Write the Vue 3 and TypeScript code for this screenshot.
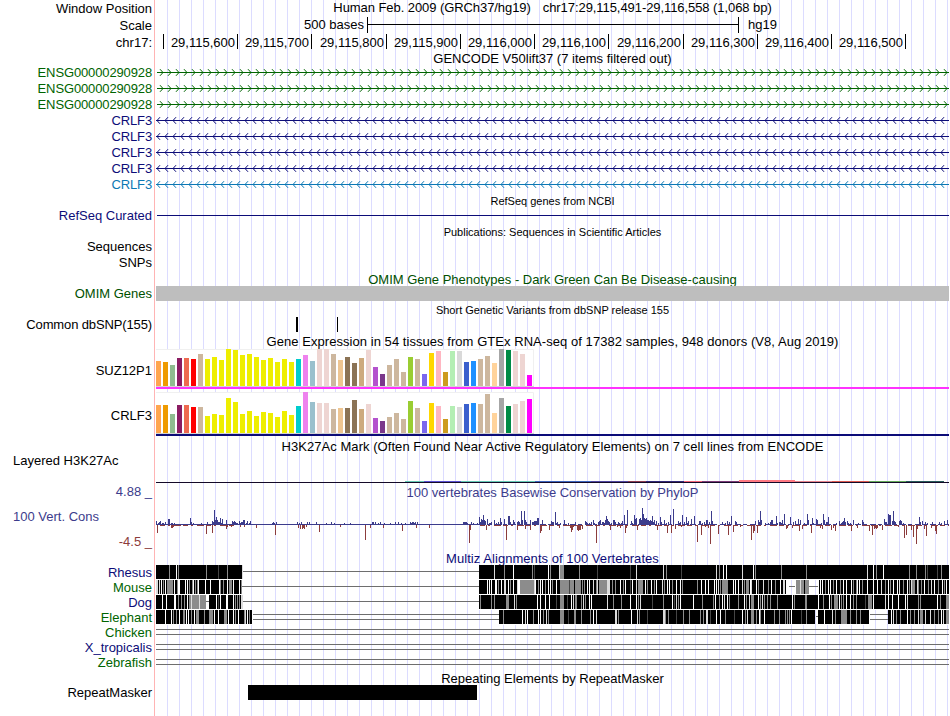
<script setup lang="ts">
import { ref } from 'vue'

const ticks = [163, 237, 311, 386, 460, 534, 608, 683, 757, 831, 905]
const tickLabels = ['', '29,115,600', '29,115,700', '29,115,800', '29,115,900', '29,116,000', '29,116,100', '29,116,200', '29,116,300', '29,116,400', '29,116,500']

const genes = ref([
  { name: 'ENSG00000290928', color: '#006400', forward: true },
  { name: 'ENSG00000290928', color: '#006400', forward: true },
  { name: 'ENSG00000290928', color: '#006400', forward: true },
  { name: 'CRLF3', color: '#0c0c78', forward: false },
  { name: 'CRLF3', color: '#0c0c78', forward: false },
  { name: 'CRLF3', color: '#0c0c78', forward: false },
  { name: 'CRLF3', color: '#0c0c78', forward: false },
  { name: 'CRLF3', color: '#0c78b4', forward: false },
])

function arrows(forward: boolean) {
  let d = ''
  for (let x = forward ? 163 : 157; x < 950; x += 8) {
    const tail = forward ? x - 3 : x + 3
    d += `M${tail} 5.2L${x} 8.5L${tail} 11.8`
  }
  return d
}

const yellow = Array(13).fill('#eeee00')
const tissueColors = [
  '#ffa54f', '#ee9a00', '#8fbc8f', '#8b1c62', '#ee6a50', '#ff0000', '#cdb79e', ...yellow,
  '#00cdcd', '#ee82ee', '#9ac0cd', '#eed5d2', '#eed5d2', '#cdb79e', '#eec591', '#8b7355',
  '#8b7355', '#cdaa7d', '#eed5d2', '#b452cd', '#7a378b', '#cdb79e', '#cdb79e', '#cdb79e',
  '#9acd32', '#cdb79e', '#7a67ee', '#ffd700', '#ffb6c1', '#cd9b1d', '#b4eeb4', '#d9d9d9',
  '#3a5fcd', '#1e90ff', '#cdb79e', '#cdb79e', '#ffd39b', '#a6a6a6', '#008b45', '#eed5d2',
  '#eed5d2', '#ff00ff',
]

const expression = [
  {
    name: 'SUZ12P1', height: 40, base: 37, top: 0, line: '#ff32ff',
    values: [25, 24, 21, 28, 28, 27, 32, 27, 29, 26, 37, 36, 31, 32, 29, 26, 28, 24, 27, 24, 27, 31, 25, 37, 37, 32, 26, 29, 23, 28, 36, 19, 12, 21, 27, 14, 29, 27, 12, 33, 35, 14, 35, 35, 24, 25, 27, 30, 23, 37, 36, 35, 32, 11],
  },
  {
    name: 'CRLF3', height: 47, base: 44, top: 3, line: '#0c0c78',
    values: [28, 28, 19, 28, 28, 26, 26, 17, 19, 18, 35, 31, 19, 22, 17, 21, 20, 16, 22, 18, 27, 41, 31, 30, 30, 24, 25, 25, 33, 24, 29, 15, 12, 16, 20, 14, 32, 25, 12, 30, 27, 14, 27, 26, 29, 30, 29, 39, 20, 35, 27, 29, 32, 34],
  },
]

const histone = [
  [405, 130, 1, '#64c8b4'], [424, 37, 1, '#5a50d2'], [535, 56, 1, '#3c64be'], [591, 37, 1, '#5046a0'],
  [628, 18, 1, '#8c3c50'], [646, 38, 1, '#322878'], [684, 18, 1, '#f06478'], [702, 37, 1, '#7d3c78'],
  [739, 56, 2, '#ff7882'], [795, 37, 1, '#e6828c'], [832, 37, 1, '#dc5a50'], [869, 37, 1, '#64aa5a'],
  [906, 38, 1, '#285a5a'],
] as [number, number, number, string][]

// "position:score" pairs, in pixels
const conserved = '156:4 158:2 159:3 160:4 162:2 163:2 165:3 168:6 169:6 171:2 172:2 174:2 190:7 191:3 193:2 201:2 207:3 212:4 213:3 214:15 215:5 216:8 217:5 218:3 219:3 220:7 221:2 222:6 226:5 232:4 233:3 234:4 235:3 236:2 237:2 239:4 240:2 241:3 242:3 243:5 244:5 246:2 247:4 249:2 250:4 272:2 273:3 274:2 276:3 297:3 299:2 301:3 307:3 309:3 316:3 326:2 331:3 334:2 344:2 350:2 372:3 373:3 375:3 378:2 380:3 384:2 390:2 395:3 398:3 401:2 405:2 410:3 411:2 412:3 413:3 414:2 415:3 417:3 463:3 464:3 465:3 466:3 467:2 471:3 473:2 477:2 479:8 480:3 481:6 482:5 483:10 484:5 485:4 487:6 489:2 490:2 491:3 494:5 496:2 498:3 500:7 501:3 504:6 508:9 509:9 510:3 513:5 514:3 517:3 518:4 519:3 521:14 522:5 524:14 525:5 526:3 530:5 532:3 533:3 534:4 535:4 536:4 537:7 538:7 542:5 551:4 552:3 553:3 555:13 556:2 557:3 560:2 564:5 568:2 575:3 585:4 586:3 587:2 589:2 591:3 593:5 594:2 598:3 599:4 600:5 602:3 603:3 604:2 605:5 606:9 607:6 608:4 609:3 611:2 613:5 614:5 615:3 618:3 619:2 621:2 622:4 624:10 627:15 631:4 632:2 634:10 635:6 636:7 639:6 640:7 641:5 642:17 643:11 644:7 645:6 646:7 647:5 648:5 649:4 650:5 651:4 652:9 653:3 654:5 656:4 658:2 660:8 661:3 664:5 666:2 668:3 670:10 673:16 678:4 679:2 680:3 682:10 684:3 686:8 687:2 688:4 691:6 694:9 699:4 700:4 702:2 704:3 706:5 707:5 709:3 711:14 712:4 722:3 725:2 727:4 729:3 731:9 735:4 736:3 755:4 758:5 759:3 760:14 761:5 765:2 768:2 770:3 771:5 772:5 776:9 777:2 779:3 780:3 781:2 782:5 784:11 790:8 793:3 795:4 798:6 800:5 804:2 807:11 808:5 812:7 813:2 816:6 817:5 821:2 823:11 824:5 826:3 827:3 828:8 836:2 839:4 841:2 842:3 843:4 844:7 845:3 847:4 848:2 850:2 853:5 858:2 862:5 863:3 884:6 885:3 886:3 888:11 889:10 890:10 892:4 893:14 894:4 895:3 899:4 900:5 901:4 903:2 919:8 920:3 922:4 925:3 927:2 932:3 939:3 941:2 944:4 947:5'
const accelerated = '157:8 171:3 172:3 173:2 206:9 212:8 226:4 227:2 231:2 240:2 244:2 256:3 275:10 298:3 300:4 302:4 303:3 304:4 306:2 319:7 340:2 365:15 370:3 383:3 402:6 416:3 429:3 469:18 470:5 486:5 506:15 517:5 525:4 530:5 540:8 541:6 549:5 559:3 570:3 571:7 572:5 573:2 577:5 578:6 579:5 580:5 582:4 596:18 610:5 617:2 620:3 625:8 626:3 637:5 657:5 667:8 671:8 675:4 681:2 697:17 701:10 705:2 708:3 710:19 718:9 728:10 733:7 740:2 751:15 753:8 754:6 757:8 786:4 787:3 792:3 799:6 802:4 811:8 820:3 822:4 831:5 833:3 835:6 851:6 857:3 869:6 872:10 874:4 875:3 876:4 877:3 882:5 898:2 904:13 906:10 911:5 913:12 916:19 917:4 924:4 926:11 931:3 935:6 936:9'

function bars(list: string, dir: number) {
  return list.split(' ').map((p) => {
    const [x, h] = p.split(':').map(Number)
    return `M${x}.5 26V${26 - h * dir}`
  }).join('')
}

// stripe codes: w = white, l = light, g = grey, d = dark; trailing number is width
const tones: Record<string, string> = { w: '#ffffff', l: '#dcdcdc', g: '#8c8c8c', d: '#464646' }

const species = [
  {
    name: 'Rhesus', color: '#0c0c78', blocks: [[156, 87], [479, 470]], single: [[243, 236]], double: [],
    marks: '169g 176w 178g 206g 218d 227g 242l 494l 504g 513w 532g 534d 548w 550g 559l 560g4 579g 597d 630d 636l 663l 666g 681d 716l 719g 723w 726w 742l 753w 755g 781g 806g 867l 873w 876g 883w 909g 916g 925g 927d 937d 941g',
  },
  {
    name: 'Mouse', color: '#006400', blocks: [[156, 86], [479, 308], [795, 14], [819, 130]], single: [[242, 237], [789, 6], [809, 9]], double: [],
    marks: '156l2 159l 161w 163g 165w 167g6 174w 177g 178w2 185w 187w 189g 192g 193w 195g 197g 198w 205w 210w 219w 220g 223g 227w 229g3 233w 239w 241g 487w 489w 491w 495w2 498g 501w 504l2 508w 510g 513w 517l 518w2 520g14 534l 535w 538g 540w 542w 545g 548w 550w 552g 556w 560g9 569d 570g4 575g6 582g 584g 587w 589w 593l 596g 597l 599g8 607l3 612g 615g 620w 623g 625w 630d 632w 636l 638g5 645w 647g 651w 654g 656w 662l 664g 667w 669w 672g 676w 680w 682g 697g 701w 705w 708w 714w 716w 718l 720g 722g6 733w 735w 738w 742l 744g 746g3 750w 751l 756w 758g 763l 768g 771w 775g 780w 783l2 786w 795w 796g4 800l 801g3 805g4 820w 822w 825g 828w 830w 833g 836w 840g 843w 846w 851w 853g 856g 857w 859w 862g 867w 873w 877w 881l 885g 888w 890g 893w 897w 899l 903g 907w 909g 911l 912g3 917l 918g 921g 924w 928g 931l 934w 938g 942w 944g 946w',
  },
  {
    name: 'Dog', color: '#0c0c78', blocks: [[156, 50], [209, 34], [479, 470]], single: [[206, 3], [243, 236]], double: [],
    marks: '162w 166w 174w2 178g 181g 184g 187w 189g2 191l 192g7 199l 200g6 216w 218d 220w 226w2 233w 235g 237g 239g 241l2 480g 491g 494g 506g3 514l 516g 537w 540w 545w 549w 556d 560g4 567d 571w 573l 575g2 581g 583l 585g 589w 591w 607l 613g 621g 630w 636w 638g 640l 652d 663g 672w 674d 676l 678g 680w 693w 702g 713g 715w 719g 722w 724l 727w 729g 738g 744w 746g 749l 751g3 758w 760g 762l 764g 767g 770g 777g 792w 794g 805g2 818w 823g 829w 831g 834g4 839w 841g 843g 846w 850w 853g 856g 865d 868g4 873w 885l 888w 892w 898w 905w 907l 918g 920g 937w 940g 946g3',
  },
  {
    name: 'Elephant', color: '#006400', blocks: [[156, 96], [499, 316], [818, 51], [888, 61]], single: [[816, 2]], double: [[253, 246], [870, 18]],
    marks: '165w 171w 173g 176g 179w 183g2 186w 188w 191g 194w 196g3 204g 209g4 214w 218w 224g3 228w 233w 235g 238w 244g 245l 247w 249g 503g 522w 525l 527w 533g 538w 540w 543g 546l 548g 560g4 568d 574g2 581g 590g 593w 596l 615l2 618g 631w 637l 639g 647d 663l2 665g 668g 676d 683g 689g 700g 703g 706l2 710d 716w 720w 725g 734d 742w 745g 747l 751g3 756g 759w 760g 764w 774g 779g 785g 787g 789g 791w 801d 806g 824w 832l 835g 841g6 850g 856g 860g 891w 893l 896g 900g 907w 910g 914g 918l 920g3 925l 930l 934g 938g 941w 943l 946g3',
  },
  { name: 'Chicken', color: '#006400', blocks: [], single: [], double: [[156, 793]], marks: '' },
  { name: 'X_tropicalis', color: '#0c0c78', blocks: [], single: [], double: [[156, 793]], marks: '' },
  { name: 'Zebrafish', color: '#006400', blocks: [], single: [], double: [[156, 793]], marks: '' },
]

function stripes(marks: string) {
  if (!marks) return []
  return marks.split(' ').map((m) => {
    const [, x, tone, w] = m.match(/(\d+)([wlgd])(\d*)/)!
    return { x: Number(x), w: Number(w || 1), fill: tones[tone] }
  })
}
</script>

<template>
  <div class="browser">
    <div class="row h17">
      <div class="label">Window Position</div>
      <div class="title pos"><span>Human Feb. 2009 (GRCh37/hg19)</span><span>chr17:29,115,491-29,116,558 (1,068 bp)</span></div>
    </div>
    <div class="row">
      <div class="label">Scale</div>
      <svg class="data" viewBox="156 0 793 16" height="16">
        <text x="364" y="12" text-anchor="end">500 bases</text>
        <path d="M367.5 0V16M738.5 0V16M367 7.5H739" stroke="#000" />
        <text x="748" y="12">hg19</text>
      </svg>
    </div>
    <div class="row h17">
      <div class="label low">chr17:</div>
      <svg class="data" viewBox="156 0 793 17" height="17">
        <g v-for="(x, i) in ticks" :key="x">
          <rect :x="x" y="1" width="1" height="15" />
          <text :x="x - 2" y="14" text-anchor="end">{{ tickLabels[i] }}</text>
        </g>
      </svg>
    </div>

    <div class="title h14">GENCODE V50lift37 (7 items filtered out)</div>
    <div v-for="(gene, i) in genes" :key="i" class="row">
      <div class="label tight" :style="{ color: gene.color }">{{ gene.name }}</div>
      <svg class="data" viewBox="156 0 793 16" height="16" fill="none" :stroke="gene.color">
        <path :d="gene.forward ? 'M157 8.5H949' : 'M156 8.5H949'" />
        <path :d="arrows(gene.forward)" />
      </svg>
    </div>

    <div class="title small h16">RefSeq genes from NCBI</div>
    <div class="row h15">
      <div class="label navy">RefSeq Curated</div>
      <svg class="data" viewBox="156 0 793 15" height="15"><rect x="157" y="7" width="792" height="1" fill="#0c0c78" /></svg>
    </div>

    <div class="title small h16">Publications: Sequences in Scientific Articles</div>
    <div class="row up"><div class="label">Sequences</div></div>
    <div class="row up"><div class="label">SNPs</div></div>

    <div class="title omim h15">OMIM Gene Phenotypes - Dark Green Can Be Disease-causing</div>
    <div class="row h15">
      <div class="label omim">OMIM Genes</div>
      <div class="data grey"></div>
    </div>

    <div class="title small h16">Short Genetic Variants from dbSNP release 155</div>
    <div class="row h15">
      <div class="label tight">Common dbSNP(155)</div>
      <svg class="data" viewBox="156 0 793 15" height="15">
        <rect x="296" width="2" height="15" />
        <rect x="337" width="1" height="15" />
      </svg>
    </div>

    <div class="title loose gtex h17">Gene Expression in 54 tissues from GTEx RNA-seq of 17382 samples, 948 donors (V8, Aug 2019)</div>
    <div v-for="track in expression" :key="track.name" class="row tall" :style="{ height: track.height + 'px' }">
      <div class="label">{{ track.name }}</div>
      <svg class="data" :viewBox="`156 0 793 ${track.height}`" :height="track.height">
        <rect x="156" :y="track.top" width="378" :height="track.base - track.top" fill="#fff" />
        <path :d="`M156 ${track.top + 0.5}H533.5V${track.base}`" fill="none" stroke="#f0f0f0" />
        <rect x="156" :y="track.base" width="378" height="1" fill="#d3d3d3" />
        <rect v-for="(v, i) in track.values" :key="i" :x="156 + i * 7" :y="track.base - v" width="5" :height="v" :fill="tissueColors[i]" />
        <rect x="156" :y="track.base + 1" width="793" height="2" :fill="track.line" />
      </svg>
    </div>

    <div class="title loose h18">H3K27Ac Mark (Often Found Near Active Regulatory Elements) on 7 cell lines from ENCODE</div>
    <div class="row h30">
      <div class="label left">Layered H3K27Ac</div>
      <svg class="data" viewBox="156 0 793 30" height="30">
        <rect x="156" y="28" width="793" height="1" fill="#140a28" />
        <rect v-for="h in histone" :key="h[0]" :x="h[0]" :y="28 - h[2]" :width="h[1]" :height="h[2]" :fill="h[3]" />
      </svg>
    </div>

    <div class="row cons">
      <div class="label axis">
        <span>4.88 _</span>
        <span class="left">100 Vert. Cons</span>
        <span class="neg">-4.5 _</span>
      </div>
      <div class="data">
        <div class="title inner">100 vertebrates Basewise Conservation by PhyloP</div>
        <svg class="data" viewBox="156 0 793 51" height="51">
          <path d="M156 25.5H480" stroke="#3c3c8c" />
          <path d="M160 26.5H235M480 26.5H949" stroke="#8c3c3c" stroke-dasharray="5 3 2 4 7 2" />
          <path d="M480 25.5H949" stroke="#3c3c8c" stroke-dasharray="6 2 4 3" />
          <path :d="bars(conserved, 1)" stroke="#3c3c8c" />
          <path :d="bars(accelerated, -1)" stroke="#8c3c3c" />
        </svg>
      </div>
    </div>

    <div class="title navy loose h15">Multiz Alignments of 100 Vertebrates</div>
    <div v-for="s in species" :key="s.name" class="row h15">
      <div class="label" :style="{ color: s.color }">{{ s.name }}</div>
      <svg class="data" viewBox="156 0 793 15" height="15">
        <g v-for="b in s.blocks" :key="b[0]">
          <rect :x="b[0]" :width="b[1]" height="15" fill="#fff" />
          <rect :x="b[0]" :width="b[1]" height="14" />
        </g>
        <rect v-for="m in stripes(s.marks)" :key="m.x" :x="m.x" :width="m.w" height="14" :fill="m.fill" />
        <rect v-for="l in s.single" :key="'s' + l[0]" :x="l[0]" y="6" :width="l[1]" height="1" fill="#6e6e6e" />
        <g v-for="l in s.double" :key="'d' + l[0]" fill="#6e6e6e">
          <rect :x="l[0]" y="4" :width="l[1]" height="1" />
          <rect :x="l[0]" y="9" :width="l[1]" height="1" />
        </g>
      </svg>
    </div>

    <div class="title h15">Repeating Elements by RepeatMasker</div>
    <div class="row h15">
      <div class="label">RepeatMasker</div>
      <svg class="data" viewBox="156 0 793 15" height="15"><rect x="248" width="229" height="15" /></svg>
    </div>
  </div>
</template>

<style>
body {
  margin: 0;
  background: #fff;
}
</style>

<style scoped>
.browser {
  width: 950px;
  height: 716px;
  overflow: hidden;
  font-family: 'Liberation Sans', Arial, sans-serif;
  font-size: 13px;
  color: #000;
  background:
    linear-gradient(#ffb4b4, #ffb4b4) 154px 0 / 1px 100% no-repeat,
    repeating-linear-gradient(to right, #dcdcff 0, #dcdcff 1px, transparent 1px, transparent 12px) 167px 0 / 783px 100% no-repeat;
}

.row {
  display: flex;
  gap: 4px;
  height: 16px;
}

.label {
  width: 152px;
  flex: none;
  line-height: 17px;
  text-align: right;
  white-space: nowrap;
}

.label.tight {
  letter-spacing: -0.13px;
}

.label.low {
  line-height: 20px;
}

.label.left,
.label .left {
  box-sizing: border-box;
  padding-left: 13px;
  text-align: left;
}

.data {
  display: block;
  width: 793px;
  flex: none;
}

svg text {
  font-size: 13px;
}

.title {
  width: 793px;
  margin-left: 156px;
  line-height: 17px;
  text-align: center;
  white-space: nowrap;
}

.title.loose {
  letter-spacing: 0.05px;
}

.title.pos {
  display: flex;
  justify-content: center;
  gap: 12px;
  margin-left: 0;
  line-height: 16px;
  letter-spacing: -0.07px;
}

.title.inner {
  height: 15px;
  margin-left: 0;
  color: #3c3c8c;
}

.title.small {
  font-size: 11px;
  line-height: 18px;
}

.h15 .label,
.up .label {
  line-height: 15px;
}

.tall .label {
  line-height: 43px;
}

.tall + .tall .label {
  line-height: 47px;
  padding-top: 3px;
}

.h14 { height: 14px; }
.h15 { height: 15px; }
.h16 { height: 16px; }
.h17 { height: 17px; }
.h18 { height: 18px; line-height: 22px; }
.h30 { height: 30px; }

.title.gtex {
  line-height: 19px;
}

.h30 .label {
  line-height: 14px;
}

.row.cons {
  height: 66px;
}

.axis {
  display: flex;
  flex-direction: column;
  gap: 9px;
  line-height: 16px;
  color: #3c3c8c;
}

.neg {
  color: #8c3c3c;
}

.navy {
  color: #0c0c78;
}

.omim {
  color: #005000;
}

.grey {
  background: #bebebe;
}
</style>
